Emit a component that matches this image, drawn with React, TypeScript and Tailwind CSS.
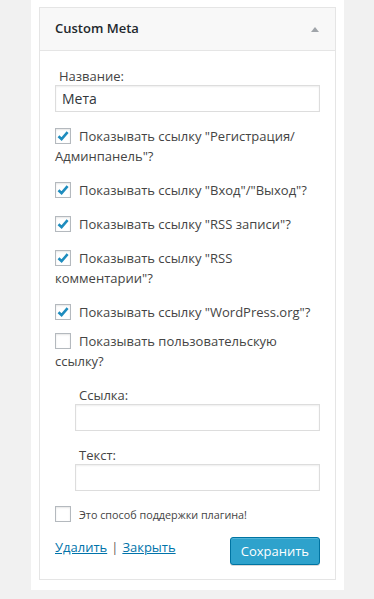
import React from 'react'

function Check({ checked }: { checked?: boolean }) {
  return (
    <span className="inline-block align-[-3px] w-4 h-4 mr-2 border border-[#b4b9be] bg-white shadow-[inset_0_1px_2px_rgba(0,0,0,0.1)] relative">
      {checked && (
        <svg viewBox="0 0 16 16" className="absolute left-[-1px] top-[-1px] w-4 h-4">
          <path d="M3.5 8.2 L6.6 11.2 L12.6 4.2" fill="none" stroke="#1e8cbe" strokeWidth="2.6" strokeLinejoin="miter" />
        </svg>
      )}
    </span>
  )
}

export default function App() {
  const options = [
    { label: 'Показывать ссылку "Регистрация/ Админпанель"?', checked: true },
    { label: 'Показывать ссылку "Вход"/"Выход"?', checked: true },
    { label: 'Показывать ссылку "RSS записи"?', checked: true },
    { label: 'Показывать ссылку "RSS комментарии"?', checked: true },
    { label: 'Показывать ссылку "WordPress.org"?', checked: true }
  ]

  return (
    <div className="min-h-[599px] bg-[#f1f1f1] pl-[31px] font-['Open_Sans',sans-serif] text-[#444]">
      <div className="w-[313px] bg-white pt-[7px] pb-[10px] pl-[8px]">
        <div className="w-[297px] border border-[#e5e5e5] bg-white">
          <div className="h-[43px] bg-[#f8f8f8] border-b border-[#e5e5e5] flex items-center justify-between pl-[15px] pr-[16px]">
            <h3 className="text-[13px] font-semibold text-[#23282d]">Custom Meta</h3>
            <svg viewBox="0 0 8 5" className="w-2 h-[5px]">
              <path d="M0 5 L4 0 L8 5 Z" fill="#a0a5aa" />
            </svg>
          </div>
          <div className="px-[15px] pt-[15px] pb-[14px] text-[13px] leading-5">
            <label className="block pl-1">Название:</label>
            <input
              type="text"
              defaultValue="Мета"
              className="block w-[265px] h-[27px] mt-[-1px] border border-[#ddd] px-[6px] text-[14px] text-[#32373c] shadow-[inset_0_1px_2px_rgba(0,0,0,0.07)] outline-none"
            />
            <div className="mt-[14px] space-y-[14px]">
              {options.map((o) => (
                <p key={o.label}>
                  <Check checked={o.checked} />
                  {o.label}
                </p>
              ))}
            </div>
            <p className="mt-[9px]">
              <Check />
              Показывать пользовательскую ссылку?
            </p>
            <div className="pl-5 mt-[14px]">
              <label className="block pl-1">Ссылка:</label>
              <input
                type="text"
                className="block w-[245px] h-[27px] mt-[-1px] border border-[#ddd] shadow-[inset_0_1px_2px_rgba(0,0,0,0.07)] outline-none"
              />
              <label className="block pl-1 mt-[14px]">Текст:</label>
              <input
                type="text"
                className="block w-[245px] h-[27px] mt-[-1px] border border-[#ddd] shadow-[inset_0_1px_2px_rgba(0,0,0,0.07)] outline-none"
              />
            </div>
            <p className="mt-[14px] text-[10.8px]">
              <Check />
              Это способ поддержки плагина!
            </p>
            <div className="mt-[12px] flex items-start justify-between">
              <div>
                <a href="#" className="text-[#0073aa] underline">Удалить</a>
                <span className="mx-[4px] text-[#6b5a55]">|</span>
                <a href="#" className="text-[#0073aa] underline">Закрыть</a>
              </div>
              <button className="h-[28px] px-[10px] rounded-[3px] bg-[#2ea2cc] border border-[#0074a2] text-white text-[13px] shadow-[inset_0_1px_0_rgba(120,200,230,0.5),0_1px_0_rgba(0,0,0,0.15)]">
                Сохранить
              </button>
            </div>
          </div>
        </div>
      </div>
    </div>
  )
}
